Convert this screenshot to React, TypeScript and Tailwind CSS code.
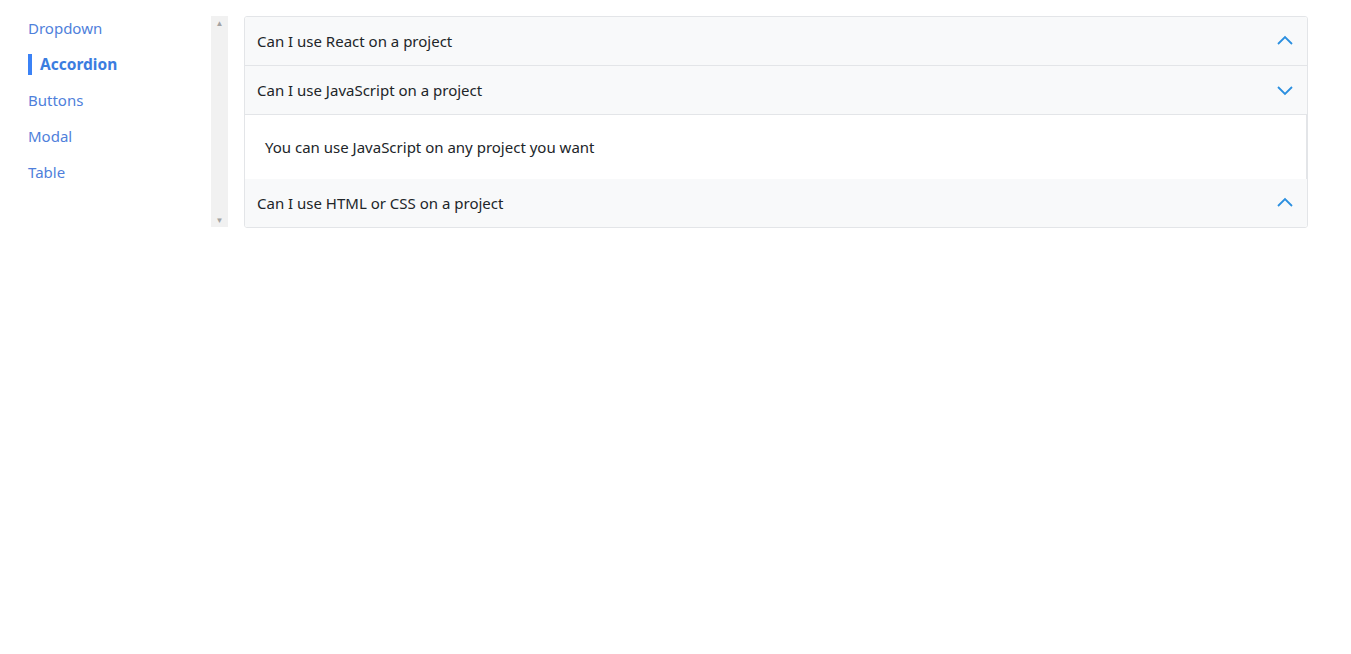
import React, { useState } from "react";

const links = ["Dropdown", "Accordion", "Buttons", "Modal", "Table"];

const items = [
  { q: "Can I use React on a project", a: "You can use React on any project you want" },
  { q: "Can I use JavaScript on a project", a: "You can use JavaScript on any project you want" },
  { q: "Can I use HTML or CSS on a project", a: "You can use HTML and CSS on any project you want" },
];

const Chevron = ({ up }: { up: boolean }) => (
  <svg width="18" height="18" viewBox="0 0 18 18" fill="none" stroke="#2b8fe0" strokeWidth="1.8">
    {up ? <path d="M2 12 L9 5 L16 12" /> : <path d="M2 6 L9 13 L16 6" />}
  </svg>
);

const App = () => {
  const [open, setOpen] = useState(1);

  return (
    <div className="flex items-start pt-4 pl-7 text-[15px]" style={{ fontFamily: '"Noto Sans", sans-serif' }}>
      <nav className="w-[183px] flex flex-col gap-[15px] pt-[2px]">
        {links.map((l) => (
          <a
            key={l}
            href="#"
            className={
              l === "Accordion"
                ? "text-[#3b7de0] font-bold border-l-4 border-[#3b82f6] pl-2 leading-[21px] text-[15.5px]"
                : "text-[#4f7fdb] leading-[21px]"
            }
          >
            {l}
          </a>
        ))}
      </nav>
      <div className="w-[17px] h-[211px] bg-[#f1f1f1] flex flex-col justify-between items-center py-[3px]">
        <span className="text-[#a3a3a3] text-[8px] leading-none">▲</span>
        <span className="text-[#a3a3a3] text-[8px] leading-none">▼</span>
      </div>
      <div className="ml-4 w-[1064px] border border-[#e3e5e8] rounded-[3px] overflow-hidden">
        {items.map((it, i) => {
          const sep = i > 0 && open !== i - 1;
          return (
            <div key={i}>
              <button
                onClick={() => setOpen(open === i ? -1 : i)}
                className={
                  "w-full flex items-center justify-between pl-3 pr-[13px] bg-[#f8f9fa] text-[#212529] text-left " +
                  (sep ? "h-[49px] border-t border-[#e3e5e8]" : "h-[48px]")
                }
              >
                <span>{it.q}</span>
                <Chevron up={open !== i} />
              </button>
              {open === i && (
                <div className="h-[65px] flex items-center px-5 bg-white text-[#212529] border-t border-r border-[#e3e5e8]">
                  {it.a}
                </div>
              )}
            </div>
          );
        })}
      </div>
    </div>
  );
};

export default App;
